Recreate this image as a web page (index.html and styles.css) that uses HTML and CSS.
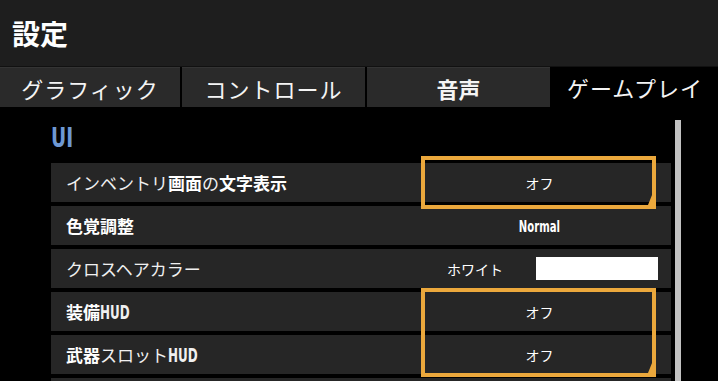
FILE: index.html
```html
<!DOCTYPE html>
<html lang="ja">
<head>
    <meta charset="UTF-8">
    <title>設定</title>
    <link rel="stylesheet" href="styles.css">
</head>
<body>
    <div class="header">
        <h1>設定</h1>
    </div>

    <div class="tabs">
        <div class="tab">グラフィック</div>
        <div class="tab">コントロール</div>
        <div class="tab tab-bold">音声</div>
        <div class="tab active">ゲームプレイ</div>
    </div>

    <div class="main">
        <div class="content">
            <h2 class="section-title">UI</h2>
            <div class="rows">
                <div class="row">
                    <div class="label">インベントリ<b>画面</b>の<b>文字表示</b></div>
                    <div class="value">オフ</div>
                </div>
                <div class="row">
                    <div class="label"><b>色覚調整</b></div>
                    <div class="value"><span class="latin">Normal</span></div>
                </div>
                <div class="row">
                    <div class="label">クロスヘアカラー</div>
                    <div class="value value-color">
                        <span>ホワイト</span>
                        <span class="swatch"></span>
                    </div>
                </div>
                <div class="row">
                    <div class="label"><b>装備</b><span class="latin">HUD</span></div>
                    <div class="value">オフ</div>
                </div>
                <div class="row">
                    <div class="label"><b>武器</b>スロット<span class="latin">HUD</span></div>
                    <div class="value">オフ</div>
                </div>
                <div class="row"></div>

                <div class="focus focus-one"></div>
                <div class="focus focus-two"></div>
            </div>
        </div>
        <div class="scrollbar"></div>
    </div>
</body>
</html>
```

FILE: styles.css
```css
body {
    font-family: "Noto Sans CJK JP", "Noto Sans", sans-serif;
    background-color: #000000;
    color: #ffffff;
    margin: 0;
    height: 381px;
    overflow: hidden;
}

.header {
    height: 66px;
    background: #1e1e1e;
    border-bottom: 1px solid #111111;
    display: flex;
    align-items: center;
    padding-left: 12px;
}

.header h1 {
    margin: 0;
    font-size: 28px;
    font-weight: bold;
    line-height: 1;
}

.tabs {
    display: grid;
    grid-template-columns: 180px 183px 183px 1fr;
    gap: 2px;
    height: 40px;
}

.tab {
    background: #2a2a2a;
    border-top: 1px solid #343434;
    display: flex;
    align-items: center;
    justify-content: center;
    font-size: 22px;
    font-weight: normal;
    letter-spacing: 1px;
    color: #f4f4f4;
}

.tab-bold {
    font-weight: bold;
    letter-spacing: 0;
}

.tab.active {
    background: #000000;
    border-top: none;
}

.main {
    display: flex;
    padding-left: 51px;
}

.content {
    width: 620px;
}

.section-title {
    margin: 0;
    padding-top: 18px;
    margin-bottom: 12px;
    font-family: "DejaVu Sans Condensed", "DejaVu Sans", sans-serif;
    font-stretch: condensed;
    font-size: 26px;
    line-height: 26px;
    font-weight: bold;
    color: #6e98d3;
    transform: scaleX(0.8);
    transform-origin: left;
}

.rows {
    position: relative;
    display: flex;
    flex-direction: column;
    gap: 4px;
}

.row {
    height: 39px;
    background: #262626;
    display: grid;
    grid-template-columns: 1fr 237px;
    padding-right: 13px;
    align-items: center;
}

.label {
    padding-left: 15px;
    font-size: 17px;
    color: #f0f0f0;
    font-weight: normal;
}

.label b {
    font-weight: bold;
    color: #ffffff;
}

.value {
    text-align: center;
    font-size: 14px;
    color: #ffffff;
}

.latin {
    display: inline-block;
    font-family: "DejaVu Sans Condensed", "DejaVu Sans", sans-serif;
    font-stretch: condensed;
    font-weight: bold;
    transform: scaleX(0.7);
    transform-origin: left;
}

.label .latin {
    font-size: 19px;
    margin-right: -12px;
}

.value .latin {
    transform-origin: center;
    font-size: 16px;
}

.value-color {
    display: flex;
    align-items: center;
    justify-content: flex-end;
}

.swatch {
    width: 122px;
    height: 23px;
    background: #ffffff;
    margin-left: 33px;
}

.focus {
    position: absolute;
    left: 370px;
    width: 235px;
    border: 4px solid #eba83c;
    box-sizing: border-box;
    pointer-events: none;
}

.focus::after {
    content: "";
    position: absolute;
    right: 0;
    bottom: 0;
    border-left: 4px solid transparent;
    border-bottom: 10px solid #eba83c;
}

.focus-one {
    top: -7px;
    height: 53px;
}

.focus-two {
    top: 125px;
    height: 89px;
}

.scrollbar {
    width: 6px;
    height: 300px;
    margin-left: 4px;
    margin-top: 13px;
    background: #c2c2c2;
}
```
